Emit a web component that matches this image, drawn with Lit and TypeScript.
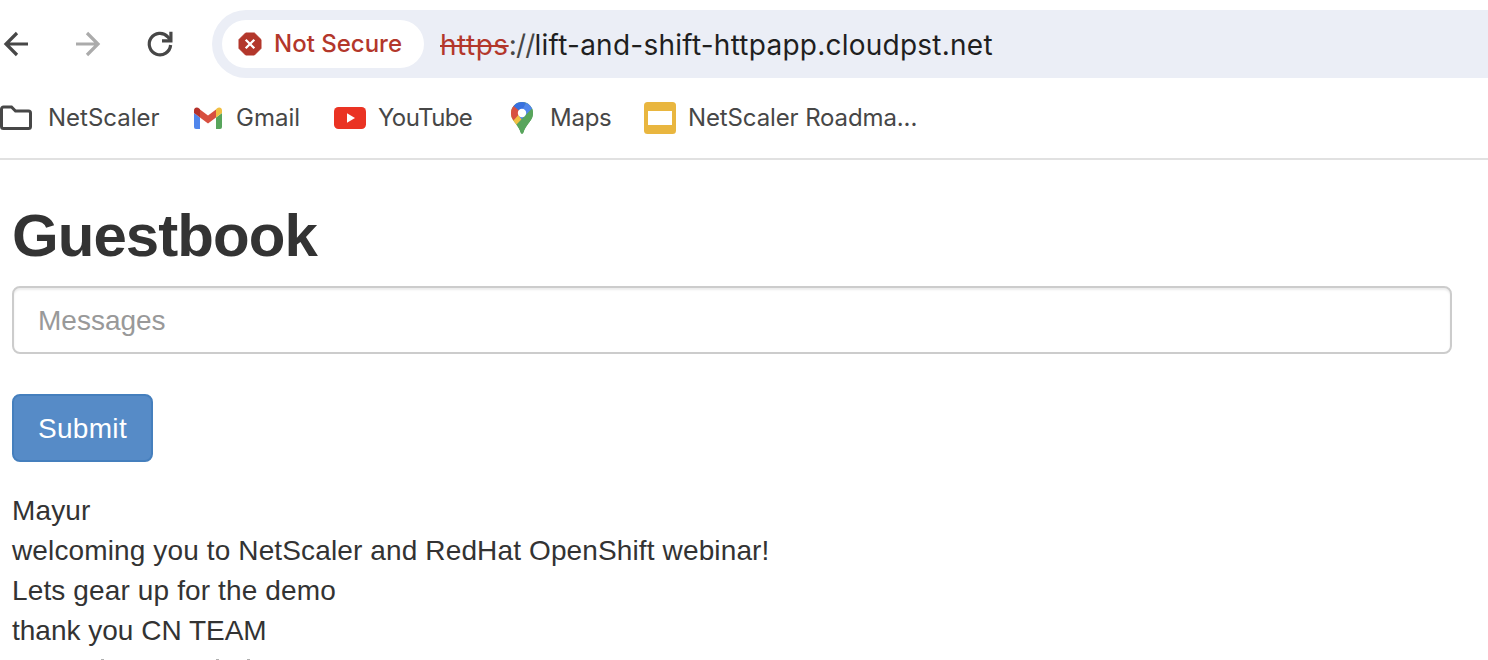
import { LitElement, html, css } from "lit";
import { customElement } from "lit/decorators.js";

const backIcon = html`<svg width="32" height="32" viewBox="0 0 32 32" fill="none" stroke="#474747" stroke-width="3.2"><path d="M28 16H6M17 5L6 16l11 11"/></svg>`;
const forwardIcon = html`<svg width="32" height="32" viewBox="0 0 32 32" fill="none" stroke="#ababab" stroke-width="3.2"><path d="M4 16h22M15 5l11 11-11 11"/></svg>`;
const reloadIcon = html`<svg width="32" height="32" viewBox="0 0 32 32" fill="none" stroke="#474747" stroke-width="3.2"><path d="M26.600 17A10.700 10.700 0 1 1 23.800 8.800l2.200 2.700"/><path d="M26.900 3.800v9H18"/></svg>`;
const dangerIcon = html`<svg width="24" height="24" viewBox="0 0 24 24"><path fill="#b3372b" d="M7.600 1h8.800L23 7.600v8.800L16.400 23H7.600L1 16.400V7.600z" stroke="#b3372b" stroke-linejoin="round"/><path d="M7.700 7.700l8.600 8.600M16.300 7.700l-8.600 8.600" stroke="#fff" stroke-width="2.300"/></svg>`;
const folderIcon = html`<svg width="34" height="28" viewBox="0 0 34 28"><path d="M1.500 5V22.500a2 2 0 0 0 2 2h25a2 2 0 0 0 2-2V9a2 2 0 0 0-2-2H15.500L11.500 3H3.500a2 2 0 0 0-2 2z" fill="none" stroke="#474747" stroke-width="3"/></svg>`;
const gmailIcon = html`<svg width="30" height="22" viewBox="0 0 30 22"><path fill="#5086ec" d="M1 6l6 4.500V22H3a2 2 0 0 1-2-2z"/><path fill="#58a55c" d="M23 10.500L29 6v14a2 2 0 0 1-2 2h-4z"/><path fill="#d85040" d="M7 2.500l8 6 8-6v8L15 16.500 7 10.500z"/><path fill="#b5312a" d="M1 3.500C1 .500 4-.800 6.500 1.700l.500.500v8.300L1 6z"/><path fill="#f1bf42" d="M29 3.500c0-3-3-4.300-5.500-1.800l-.500.500v8.300L29 6z"/></svg>`;
const youtubeIcon = html`<svg width="32" height="22" viewBox="0 0 32 22"><rect width="32" height="22" rx="4.500" fill="#ea3323"/><path d="M13 6.300v9.400l8-4.700z" fill="#fff"/></svg>`;
const mapsIcon = html`<svg width="22" height="32" viewBox="0 0 22 32"><defs><clipPath id="pin"><path d="M11 0a11 11 0 0 1 11 11c0 5-2.300 7.500-5 11-2.300 3-3.700 5.500-4.500 8.500-.500 1.700-2.500 1.700-3 0C8.700 27.500 7.300 25 5 22c-2.700-3.500-5-6-5-11A11 11 0 0 1 11 0z"/></clipPath></defs><g clip-path="url(#pin)"><path fill="#58a55c" d="M0 0h22v32H0z"/><path fill="#f1bf42" d="M0 8L11 4l8.500 5L5.500 25 0 22z"/><path fill="#d85040" d="M0 3l3-.500L11 9 2.500 18.500 0 15z"/><path fill="#3871e0" d="M2.500 4L5 0h10l-4 11z"/><path fill="#5086ec" d="M15.500 0H22v6.500L11 18l-3-4z"/><path fill="#58a55c" d="M22 5.500v13L11 32 5 23z"/></g><circle cx="11" cy="11" r="4.200" fill="#fff"/></svg>`;
const slidesIcon = html`<svg width="32" height="32" viewBox="0 0 32 32"><rect width="32" height="32" rx="3.500" fill="#e9b63f"/><path fill="#fff" d="M4 9h24v14H4z"/></svg>`;

/* Tips of the ascenders of the next message, cut off by the window edge. */
const clippedLine = html`<svg width="260" height="1" viewBox="0 0 260 1" fill="#b0b0b0"><path d="M89 0h3v1h-3zM204 0h3v1h-3zM235 0h3v1h-3z"/></svg>`;

@customElement("app-root")
export class AppRoot extends LitElement {
  static styles = css`
    :host { display: block; height: 660px; overflow: hidden; background: #fff; }
    svg { display: block; flex: none; }
    .toolbar { display: flex; align-items: center; height: 68px; padding-top: 10px; }
    .nav { display: flex; gap: 40px; width: 212px; flex: none; }
    .address { flex: 1; display: flex; align-items: center; height: 68px; border-radius: 34px 0 0 34px; background: #ebeef6; padding-left: 10px; box-sizing: border-box; }
    .chip { display: flex; align-items: center; box-sizing: border-box; width: 202px; height: 48px; border-radius: 24px; background: #fff; padding-left: 16px; gap: 12px; color: #b3372b; font: 500 24px Inter, sans-serif; white-space: nowrap; }
    .secure { padding-bottom: 2px; }
    .url { margin-left: 16px; padding-top: 1px; font: 28px Inter, sans-serif; color: #1f1f1f; white-space: nowrap; }
    .scheme { color: #b3372b; text-decoration: line-through; text-decoration-thickness: 2px; letter-spacing: 0.5px; }
    .sep { color: #474747; letter-spacing: -0.8px; }
    .host { letter-spacing: 0.24px; }
    .bookmarks { display: flex; align-items: center; height: 80px; border-bottom: 2px solid #e1e1e1; font: 24px Inter, sans-serif; color: #474747; }
    .bookmark { display: flex; align-items: center; white-space: nowrap; }
    .bookmark span { padding-bottom: 2px; }
    .folder { width: 193px; gap: 14px; }
    .gmail { width: 141px; gap: 13px; }
    .youtube { width: 177px; gap: 12px; letter-spacing: -0.6px; }
    .maps { width: 133px; gap: 17px; letter-spacing: -0.25px; }
    .slides { gap: 12px; letter-spacing: -0.12px; }
    .page { padding: 0 36px 0 12px; font-family: "Liberation Sans", Arial, sans-serif; color: #333; font-size: 28px; }
    h1 { margin: 42px 0 0; height: 84px; line-height: 68px; font-size: 60px; font-weight: 700; letter-spacing: -0.95px; }
    input { display: block; box-sizing: border-box; width: 100%; height: 68px; border: 2px solid #ccc; border-radius: 8px; padding: 2px 24px 0; font: inherit; box-shadow: inset 0 2px 2px rgba(0,0,0,.075); }
    input::placeholder { color: #999; opacity: 1; }
    button { display: block; box-sizing: border-box; width: 141px; height: 68px; margin: 40px 0 29px; padding: 2px 0 0; border: 2px solid #457fbd; border-radius: 8px; background: #568bc7; color: #fff; font: inherit; letter-spacing: 0.3px; }
    .message { line-height: 40px; white-space: nowrap; letter-spacing: 0.13px; }
    .message:last-of-type { height: 39px; letter-spacing: 0; }
    .clipped { padding-top: 9px; }
  `;
  render() {
    return html`
      <div class="toolbar">
        <div class="nav">${backIcon}${forwardIcon}${reloadIcon}</div>
        <div class="address">
          <div class="chip">${dangerIcon}<span class="secure">Not Secure</span></div>
          <div class="url"><span class="scheme">https</span><span class="sep">://</span><span class="host">lift-and-shift-httpapp.cloudpst.net</span></div>
        </div>
      </div>
      <div class="bookmarks">
        <div class="bookmark folder">${folderIcon}<span>NetScaler</span></div>
        <div class="bookmark gmail">${gmailIcon}<span>Gmail</span></div>
        <div class="bookmark youtube">${youtubeIcon}<span>YouTube</span></div>
        <div class="bookmark maps">${mapsIcon}<span>Maps</span></div>
        <div class="bookmark slides">${slidesIcon}<span>NetScaler Roadma...</span></div>
      </div>
      <div class="page">
        <h1>Guestbook</h1>
        <input placeholder="Messages" />
        <button>Submit</button>
        <section>
          ${["Mayur", "welcoming you to NetScaler and RedHat OpenShift webinar!", "Lets gear up for the demo", "thank you CN TEAM"].map((m) => html`<div class="message">${m}</div>`)}
        </section>
        <section class="clipped">${clippedLine}</section>
      </div>`;
  }
}
